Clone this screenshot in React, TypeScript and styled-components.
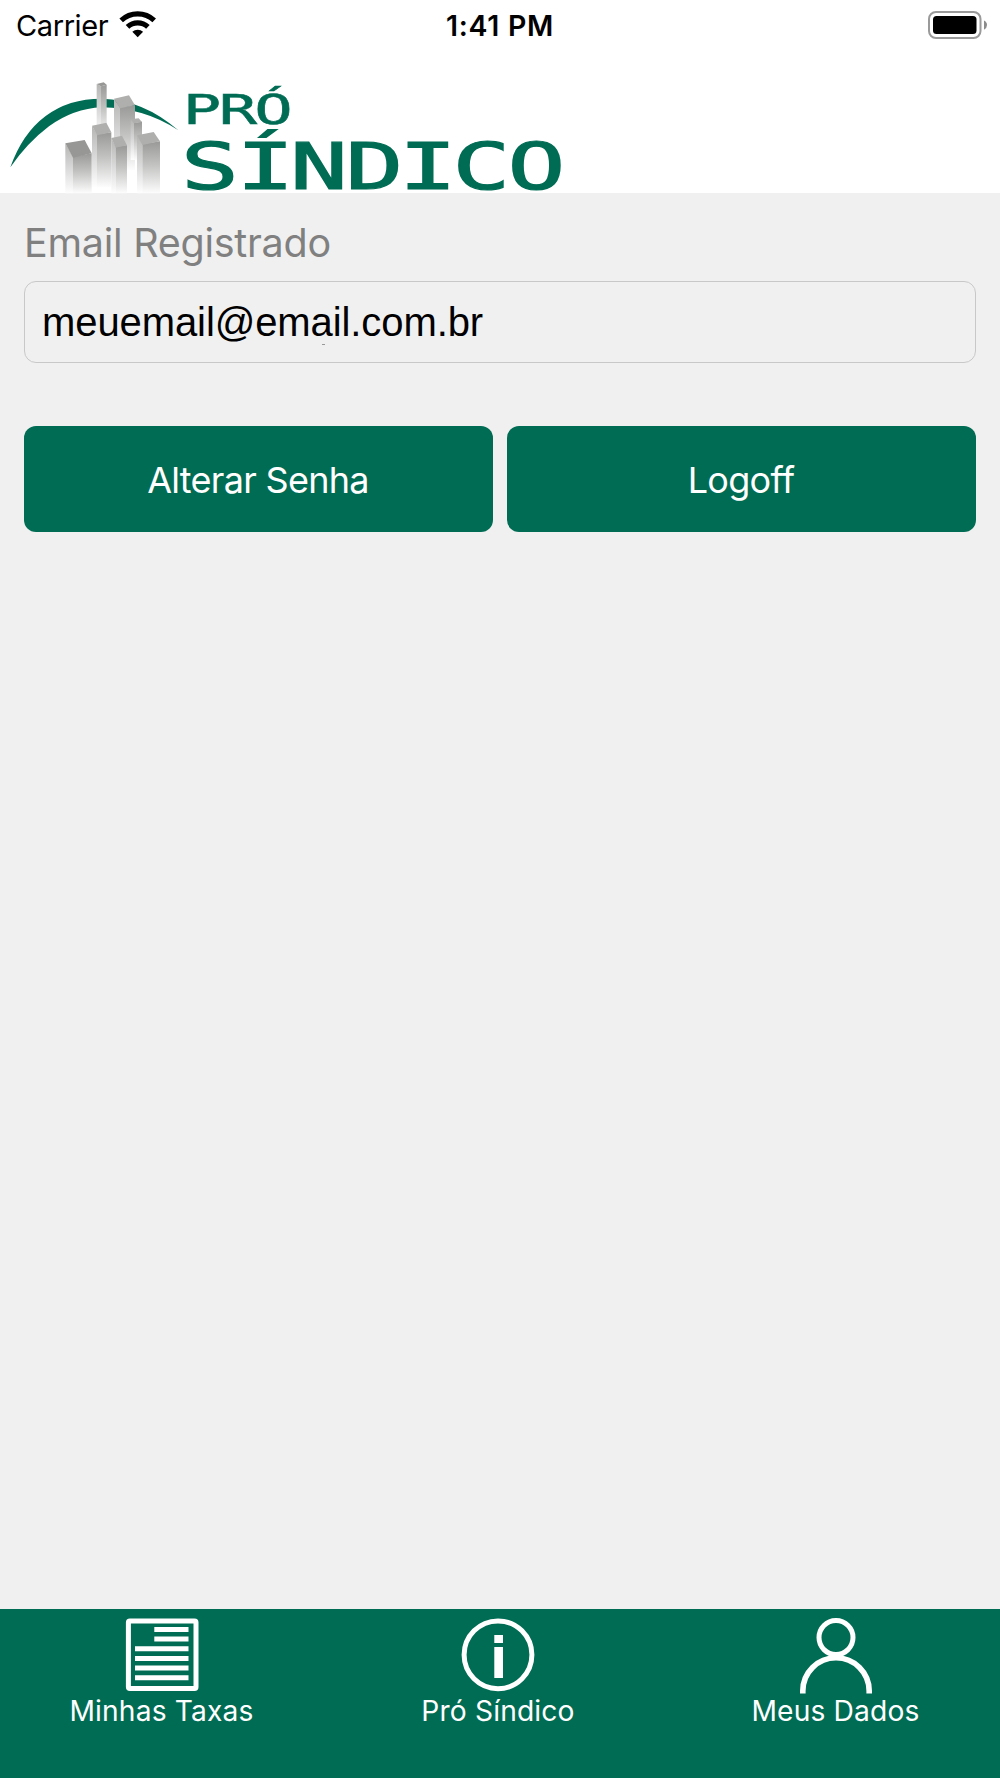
import React from "react";
import styled, { createGlobalStyle } from "styled-components";

const GREEN = "#006c54";

const GlobalStyle = createGlobalStyle`
  *, *::before, *::after { box-sizing: border-box; }
  body { margin: 0; background: #f0f0f0; }
`;

const Screen = styled.div`
  display: flex;
  flex-direction: column;
  width: 1000px;
  height: 1778px;
  background: #f0f0f0;
  font-family: Inter, "Liberation Sans", sans-serif;
`;

const StatusBar = styled.div`
  display: grid;
  grid-template-columns: 1fr auto 1fr;
  align-items: center;
  height: 50px;
  padding: 1px 13px 0 16px;
  background: #fff;
  color: #000;
`;

const Carrier = styled.div`
  display: flex;
  align-items: center;
  gap: 11px;
  font-size: 29px;
  line-height: 50px;
  letter-spacing: -0.4px;

  svg { margin-top: -4px; }
`;

const Clock = styled.time`
  margin-right: 3px;
  font-size: 28.5px;
  font-weight: 600;
  line-height: 50px;
  letter-spacing: 0.7px;
`;

const Battery = styled.svg`
  justify-self: end;
  display: block;
  margin-top: -2px;
`;

const Header = styled.header`
  display: flex;
  align-items: flex-end;
  height: 143px;
  background: #fff;
`;

const Logo = styled.svg`
  display: block;
  overflow: visible;
`;

const LogoText = styled.text`
  font-family: "DejaVu Sans Mono", monospace;
  fill: ${GREEN};
  stroke: ${GREEN};
`;

const Content = styled.main`
  display: flex;
  flex: 1;
  flex-direction: column;
  padding: 21px 24px 0;
`;

const FieldLabel = styled.label`
  color: #808080;
  font-size: 39.5px;
  line-height: 58px;
  letter-spacing: -0.27px;
  margin-bottom: 9px;
`;

const Field = styled.div`
  position: relative;
  display: flex;
  align-items: center;
  height: 82px;
  padding: 0 17px;
  border: 1px solid #c8c8c8;
  border-radius: 12px;
  color: #000;
  font-family: "Liberation Sans", Arial, sans-serif;
  font-size: 40px;
  letter-spacing: -0.09px;

  &::after {
    content: "";
    position: absolute;
    left: 297px;
    top: 62px;
    width: 3px;
    height: 1px;
    background: #999;
  }
`;

const Actions = styled.div`
  display: grid;
  grid-template-columns: 1fr 1fr;
  gap: 14px;
  margin-top: 63px;
`;

const ActionButton = styled.button`
  height: 106px;
  padding: 1px 1px 0 0;
  border: 0;
  border-radius: 12px;
  background: ${GREEN};
  color: #fff;
  font-family: inherit;
  font-size: 36px;
  letter-spacing: -0.7px;
`;

const TabBar = styled.nav`
  display: grid;
  grid-template-columns: 323px 350px 325px;
  height: 169px;
  background: ${GREEN};
`;

const Tab = styled.a`
  display: flex;
  flex-direction: column;
  align-items: center;
  padding-top: 9px;
  color: #fff;
  font-size: 28.2px;
  line-height: 36px;
  letter-spacing: 0.15px;

  svg { display: block; margin-bottom: 1px; }
`;

const WifiGlyph = () => (
  <svg width="38" height="28" viewBox="0 0 38 28">
    <g fill="none" stroke="#000" strokeWidth="5.2">
      <path d="M2.2 10.4A24 24 0 0 1 35.2 10.4" />
      <path d="M8.5 16.8A15 15 0 0 1 28.9 16.8" />
    </g>
    <path d="M18.7 27.3L13.3 21.8A8 8 0 0 1 24.1 21.8Z" />
  </svg>
);

const BatteryGlyph = () => (
  <Battery width="59" height="28" viewBox="0 0 59 28">
    <rect x="1" y="1" width="51.5" height="26" rx="7" fill="none" stroke="#9a9a9a" strokeWidth="2" />
    <rect x="5" y="5" width="43.5" height="18" rx="3.5" />
    <path d="M56 9.5Q59 11 59 14T56 18.7Z" fill="#8c8c8c" />
  </Battery>
);

/* Centres the monospaced letters of a wordmark line on the given positions. */
const letterXs = (centers: number[], size: number, stretch: number) =>
  centers.map((c) => (c / stretch - size * 0.301).toFixed(2)).join(" ");

type Tower = { left: string; right: string; top: string };

const towers: Tower[] = [
  { left: "290,42 303,49 303,200 290,200", right: "303,49 320,44 320,200 303,200", top: "290,42 311,37 320,44 303,49" },
  { left: "342,86 360,112 360,300 342,300", right: "360,112 405,106 405,300 360,300", top: "342,86 387,76 405,106 360,115" },
  { left: "392,148 402,158 402,270 392,270", right: "402,158 426,155 426,270 402,270", top: "392,148 416,145 426,156 402,160" },
  { left: "276,167 291,193 291,352 276,352", right: "291,193 334,187 334,352 291,352", top: "276,167 319,158 334,187 291,196" },
  { left: "334,204 347,230 347,370 334,370", right: "347,230 381,226 381,370 347,370", top: "334,204 366,197 381,226 347,233" },
  { left: "196,220 219,260 219,370 196,370", right: "219,260 275,250 275,370 219,370", top: "196,220 254,210 275,250 219,263" },
  { left: "411,196 427,222 427,370 411,370", right: "427,222 480,214 480,370 427,370", top: "411,196 461,186 480,214 427,225" },
];

const BrandLogo = () => (
  <Logo width="570" height="123" viewBox="0 70 570 123" role="img" aria-label="Pró Síndico">
    <defs>
      <linearGradient id="faceDark" x1="0" y1="0" x2="0" y2="1">
        <stop offset="0" stopColor="#999997" />
        <stop offset="0.45" stopColor="#c2c2c1" />
        <stop offset="1" stopColor="#fdfdfd" />
      </linearGradient>
      <linearGradient id="faceLight" x1="0" y1="0" x2="0" y2="1">
        <stop offset="0" stopColor="#b5b5b4" />
        <stop offset="0.5" stopColor="#d9d9d9" />
        <stop offset="1" stopColor="#fefefe" />
      </linearGradient>
    </defs>
    <g transform="translate(0 70) scale(0.33333)">
      <path
        d="M31 292Q67 190 137 138Q205 86 305 86Q430 89 535 181Q432 113 305 112Q220 116 147 169Q82 218 31 292Z"
        fill={GREEN}
      />
      {towers.map((t, i) => (
        <g key={i}>
          <polygon points={t.left} fill="url(#faceLight)" />
          <polygon points={t.right} fill="url(#faceDark)" />
          <polygon points={t.top} fill={i === 0 || i === 5 ? "#979796" : "#afafae"} />
        </g>
      ))}
    </g>
    <LogoText
      transform="scale(1.54 1)"
      x={letterXs([202, 238, 273.5], 41.5, 1.54)}
      y="123.7"
      fontSize="41.5"
      strokeWidth="0.5"
    >
      PRÓ
    </LogoText>
    <LogoText
      transform="scale(1.5 1)"
      x={letterXs([210, 265.5, 319, 374.5, 428, 481.5, 536.5], 64, 1.5)}
      y="189"
      fontSize="64"
      strokeWidth="1.2"
    >
      SÍNDICO
    </LogoText>
  </Logo>
);

const DocumentIcon = () => (
  <svg width="74" height="74" viewBox="0 0 74 74">
    <rect x="3.4" y="2.9" width="67.6" height="67.6" rx="1.5" fill="none" stroke="#fff" strokeWidth="5" />
    <path
      d="M29.3 11.5H63.5M29.3 21.1H63.5M10 30.8H63.5M10 40.4H63.5M10 50.1H63.5M10 59.8H63.5"
      stroke="#fff"
      strokeWidth="5"
      fill="none"
    />
  </svg>
);

const InfoIcon = () => (
  <svg width="74" height="74" viewBox="0 0 74 74">
    <circle cx="37" cy="36.8" r="33.9" fill="none" stroke="#fff" strokeWidth="5" />
    <path d="M33.3 17H42V25H33.3ZM33.3 29H42V60H33.3Z" fill="#fff" />
  </svg>
);

const UserIcon = () => (
  <svg width="74" height="74" viewBox="0 0 74 74" overflow="visible">
    <circle cx="37" cy="19.6" r="17" fill="none" stroke="#fff" strokeWidth="5" />
    <path d="M3.8 75.5V73A33.2 33.2 0 0 1 70.2 73V75.5" fill="none" stroke="#fff" strokeWidth="5.6" />
  </svg>
);

export default function App() {
  return (
    <>
      <GlobalStyle />
      <Screen>
        <StatusBar>
          <Carrier>
            Carrier
            <WifiGlyph />
          </Carrier>
          <Clock>1:41 PM</Clock>
          <BatteryGlyph />
        </StatusBar>
        <Header>
          <BrandLogo />
        </Header>
        <Content>
          <FieldLabel>Email Registrado</FieldLabel>
          <Field>meuemail@email.com.br</Field>
          <Actions>
            <ActionButton>Alterar Senha</ActionButton>
            <ActionButton>Logoff</ActionButton>
          </Actions>
        </Content>
        <TabBar>
          <Tab>
            <DocumentIcon />
            Minhas Taxas
          </Tab>
          <Tab>
            <InfoIcon />
            Pró Síndico
          </Tab>
          <Tab>
            <UserIcon />
            Meus Dados
          </Tab>
        </TabBar>
      </Screen>
    </>
  );
}
